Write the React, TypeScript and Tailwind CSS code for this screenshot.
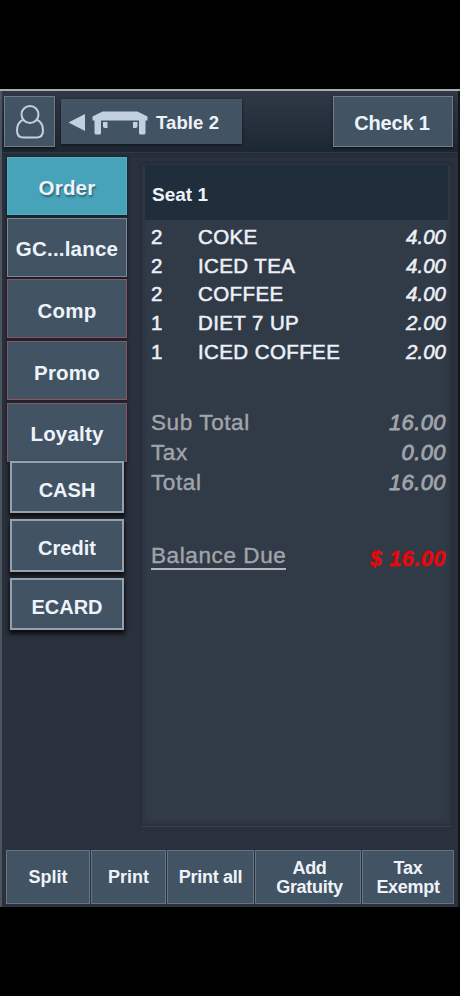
import clsx from "clsx";

const items = [
  { qty: 2, name: "COKE", price: "4.00" },
  { qty: 2, name: "ICED TEA", price: "4.00" },
  { qty: 2, name: "COFFEE", price: "4.00" },
  { qty: 1, name: "DIET 7 UP", price: "2.00" },
  { qty: 1, name: "ICED COFFEE", price: "2.00" },
];

const totals = [
  { label: "Sub Total", value: "16.00" },
  { label: "Tax", value: "0.00" },
  { label: "Total", value: "16.00" },
];

const actions = [
  { label: "Order", style: "h-[58px] pt-[5px] bg-[#47a3ba] border-[#4fb0c4] [text-shadow:1px_2px_2px_rgba(0,0,0,0.4)]" },
  { label: "GC...lance", style: "h-[59px] pt-[4px] bg-[#425364] border-[#7d8a94]" },
  { label: "Comp", style: "h-[59px] pt-[5px] bg-[#425364] border-[#8a5761]" },
  { label: "Promo", style: "h-[59px] pt-[5px] bg-[#425364] border-[#8a5761]" },
  { label: "Loyalty", style: "h-[59px] pt-[5px] bg-[#425364] border-[#8a5761]" },
];

const payments = ["CASH", "Credit", "ECARD"];

const footer = [
  { label: "Split", width: "w-[84px] px-2" },
  { label: "Print", width: "w-[75px] px-2" },
  { label: "Print all", width: "w-[87px] whitespace-nowrap tracking-[-0.3px]" },
  { label: "Add Gratuity", width: "w-[106px] pl-[11px] pr-[8px] tracking-[-0.3px]" },
  { label: "Tax Exempt", width: "w-[92px] px-2 tracking-[-0.3px]" },
];

function UserIcon() {
  return (
    <svg width="28" height="34" viewBox="0 0 28 34" fill="none" stroke="#c3d0df" strokeWidth="2">
      <circle cx="14" cy="9.5" r="8.5" />
      <path d="M7 14.6C3.4 16.6 1 20.4 1 25.5C1 30.5 3 32.6 7.5 32.6H20.5C25 32.6 27 30.5 27 25.5C27 20.4 24.6 16.6 21 14.6" />
    </svg>
  );
}

function TableIcon() {
  return (
    <svg width="56" height="24" viewBox="0 0 56 24" fill="#c3d0df">
      <path d="M10.5 0.5H45.5L55.5 5.5V9.5H53.5V22.5L52.5 23.5H48L47 22.5V9.5H9V22.5L8 23.5H3.5L2.5 22.5V9.5H0.5V5.5Z" />
      <path d="M11 11H15.5V17H12.5L11 16ZM41 11H45.5V16L44 17H41Z" />
    </svg>
  );
}

function Header() {
  return (
    <header className="flex h-[61px] shrink-0 items-start bg-gradient-to-b from-[#2f3946] via-[#27313d] to-[#1d2732] pt-[5px] pr-[5px] pl-[2px]">
      <button className="flex h-[51px] w-[51px] items-center justify-center border border-[#6e7d8b] bg-[#425364] shadow-[0_2px_3px_rgba(0,0,0,0.5)]">
        <UserIcon />
      </button>
      <button className="mt-[3px] ml-[6px] flex h-[45px] w-[181px] items-center bg-[#425364] pt-px pl-[7px] shadow-[0_1px_3px_rgba(0,0,0,0.6)]">
        <svg width="17" height="17" viewBox="0 0 17 17" fill="#c3d0df">
          <path d="M0.5 8.5L17 0V17Z" />
        </svg>
        <span className="ml-[7px] pt-px">
          <TableIcon />
        </span>
        <span className="ml-[8px] pt-px text-[18.5px] font-bold tracking-[0.1px]">Table 2</span>
      </button>
      <button className="ml-auto h-[51px] w-[120px] border border-[#6e7d8b] bg-[#425364] pt-[2px] pr-[2px] text-[20px] font-bold tracking-[-0.2px] shadow-[0_2px_3px_rgba(0,0,0,0.5)]">
        Check 1
      </button>
    </header>
  );
}

function Sidebar() {
  return (
    <aside className="flex w-[120px] shrink-0 flex-col">
      <div className="flex flex-col gap-[2.7px]">
        {actions.map((action) => (
          <button
            key={action.label}
            className={clsx(
              "border text-[20.5px] font-bold tracking-[0.2px] shadow-[0_1px_2px_1px_rgba(20,22,35,0.6)]",
              action.style
            )}
          >
            {action.label}
          </button>
        ))}
      </div>
      <div className="relative -mt-px flex flex-col items-center gap-[6px]">
        {payments.map((label) => (
          <button
            key={label}
            className="h-[52.5px] w-[114px] border-2 border-[#95a2ad] bg-[#425364] pt-[5px] text-[20px] font-bold shadow-[0_3px_4px_1px_rgba(0,0,0,0.75)]"
          >
            {label}
          </button>
        ))}
      </div>
    </aside>
  );
}

function Receipt() {
  return (
    <section className="mt-[5px] ml-[13px] h-[665px] w-[313px] rounded-[4px] border border-[#242b38] border-b-[#3a4450] bg-[#313a47] shadow-[inset_0_0_5px_1px_rgba(30,36,48,0.65)]">
      <h2 className="mx-[4px] mt-[2px] flex h-[55px] items-center bg-[#202d3a] pt-[5px] pl-[7px] text-[19px] font-bold">
        Seat 1
      </h2>
      <ul className="mt-[3px] pr-[6px] pl-[10px] text-[20.5px] [-webkit-text-stroke:0.55px_#e9edf5]">
        {items.map((item) => (
          <li key={item.name} className="flex h-[28.7px] items-center">
            <span className="w-[47px]">{item.qty}</span>
            <span className="tracking-[0.4px]">{item.name}</span>
            <span className="ml-auto italic">{item.price}</span>
          </li>
        ))}
      </ul>
      <dl className="mt-[41px] pr-[6px] pl-[10px] text-[#a1a5aa] [-webkit-text-stroke:0.4px_#a1a5aa]">
        {totals.map((row) => (
          <div key={row.label} className="flex h-[30px] items-center justify-between">
            <dt className="text-[22.5px] tracking-[0.6px]">{row.label}</dt>
            <dd className="text-[22px] tracking-[0.4px] italic [-webkit-text-stroke:0.8px_#a1a5aa]">{row.value}</dd>
          </div>
        ))}
        <div className="mt-[44px] flex h-[30px] items-center justify-between">
          <dt className="mt-px border-b-2 border-[#b4b8bc] text-[22.5px] leading-[24px] tracking-[0.6px]">Balance Due</dt>
          <dd className="mt-[5px] text-[22px] font-bold tracking-[0.4px] text-[#ee0508] italic [-webkit-text-stroke:0.3px_#ee0508]">$ 16.00</dd>
        </div>
      </dl>
    </section>
  );
}

export default function App() {
  return (
    <div className="h-[996px] w-[460px] bg-black pt-[89px] font-['Liberation_Sans',Arial,sans-serif] text-[#eef3fa]">
      <div className="flex h-[818px] flex-col border-t-2 border-[#a9adad]">
        <div className="flex min-h-0 flex-1 flex-col border-r-2 border-l-2 border-r-[#11151c] border-l-[#4c545e] bg-[#2a303c]">
          <Header />
          <div className="h-[5px] shrink-0 border-t border-[#2a3a49] bg-[#262c38]" />
          <main className="flex flex-1 pl-[5px]">
            <Sidebar />
            <Receipt />
          </main>
          <footer className="mb-[3px] flex h-[54px] shrink-0 gap-px pl-[4px]">
            {footer.map((item) => (
              <button
                key={item.label}
                className={clsx(
                  "border border-[#667482] bg-[#425364] pt-[2px] text-[18px] leading-[19.5px] font-bold",
                  item.width
                )}
              >
                {item.label}
              </button>
            ))}
          </footer>
        </div>
      </div>
    </div>
  );
}
